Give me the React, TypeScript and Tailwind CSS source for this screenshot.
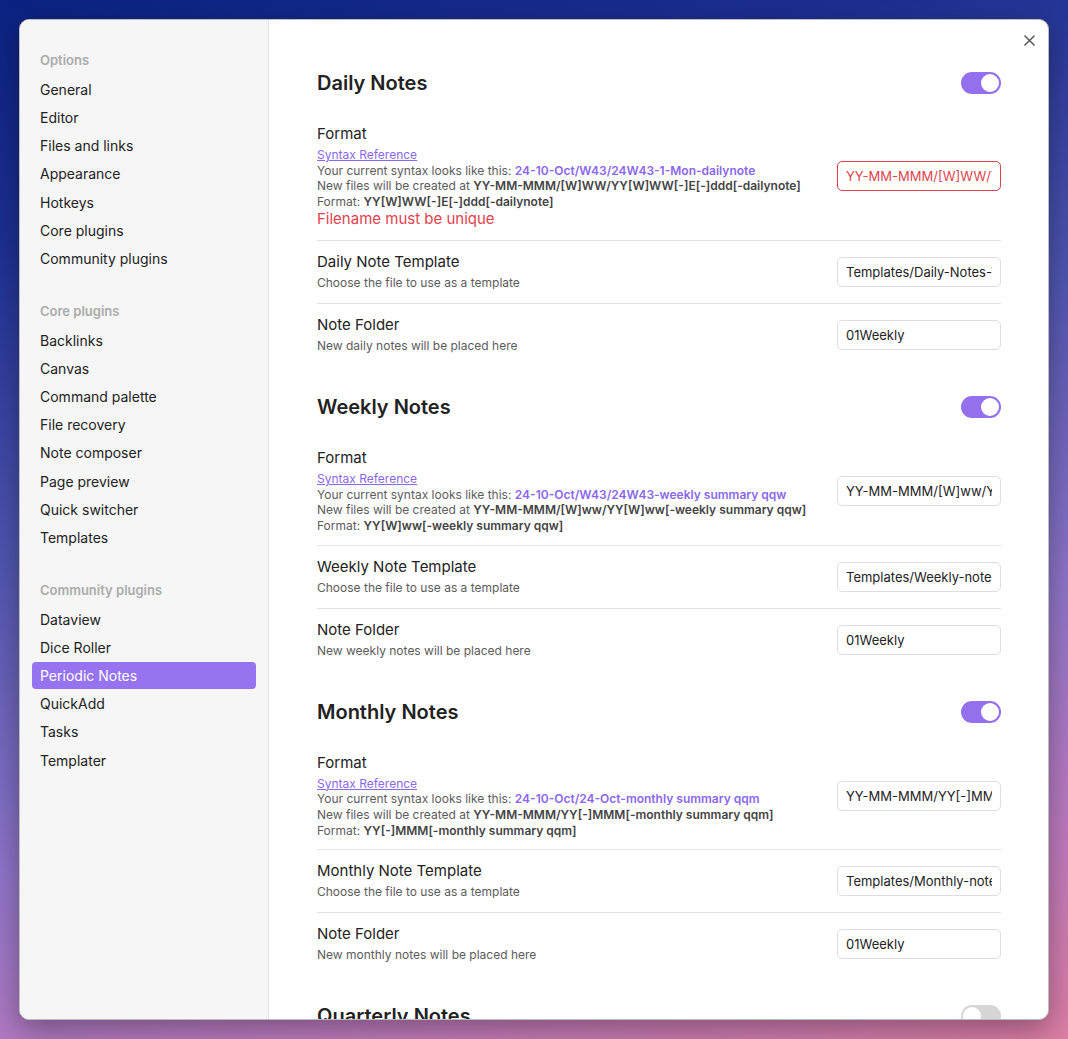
import React from "react";

const FONT = { fontFamily: "Inter, 'Noto Sans', sans-serif" };

type Section = {
  title: string;
  enabled: boolean;
  syntax?: string;
  createdAt?: string;
  format?: string;
  value?: string;
  error?: boolean;
  templateLabel?: string;
  template?: string;
  folderDesc?: string;
};

const NAV = [
  { header: "Options", items: ["General", "Editor", "Files and links", "Appearance", "Hotkeys", "Core plugins", "Community plugins"] },
  { header: "Core plugins", items: ["Backlinks", "Canvas", "Command palette", "File recovery", "Note composer", "Page preview", "Quick switcher", "Templates"] },
  { header: "Community plugins", items: ["Dataview", "Dice Roller", "Periodic Notes", "QuickAdd", "Tasks", "Templater"] },
];

const SECTIONS: Section[] = [
  {
    title: "Daily Notes",
    enabled: true,
    syntax: "24-10-Oct/W43/24W43-1-Mon-dailynote",
    createdAt: "YY-MM-MMM/[W]WW/YY[W]WW[-]E[-]ddd[-dailynote]",
    format: "YY[W]WW[-]E[-]ddd[-dailynote]",
    value: "YY-MM-MMM/[W]WW/YY[W]WW[-]E[-]ddd[-dailynote]",
    error: true,
    templateLabel: "Daily Note Template",
    template: "Templates/Daily-Notes-Template",
    folderDesc: "New daily notes will be placed here",
  },
  {
    title: "Weekly Notes",
    enabled: true,
    syntax: "24-10-Oct/W43/24W43-weekly summary qqw",
    createdAt: "YY-MM-MMM/[W]ww/YY[W]ww[-weekly summary qqw]",
    format: "YY[W]ww[-weekly summary qqw]",
    value: "YY-MM-MMM/[W]ww/YY[W]ww[-weekly summary qqw]",
    templateLabel: "Weekly Note Template",
    template: "Templates/Weekly-note-template",
    folderDesc: "New weekly notes will be placed here",
  },
  {
    title: "Monthly Notes",
    enabled: true,
    syntax: "24-10-Oct/24-Oct-monthly summary qqm",
    createdAt: "YY-MM-MMM/YY[-]MMM[-monthly summary qqm]",
    format: "YY[-]MMM[-monthly summary qqm]",
    value: "YY-MM-MMM/YY[-]MMM[-monthly summary qqm]",
    templateLabel: "Monthly Note Template",
    template: "Templates/Monthly-note-template",
    folderDesc: "New monthly notes will be placed here",
  },
  { title: "Quarterly Notes", enabled: false },
];

function Toggle({ on }: { on: boolean }) {
  return (
    <div
      className={
        "flex h-[22px] w-[40px] shrink-0 items-center rounded-full px-[2px] " +
        (on ? "justify-end bg-[#9470ef]" : "justify-start bg-[#d6d6d6]")
      }
    >
      <div className="h-[18px] w-[18px] rounded-full bg-white" />
    </div>
  );
}

function TextInput({ value, error }: { value: string; error?: boolean }) {
  return (
    <input
      readOnly
      value={value}
      style={FONT}
      className={
        "h-[30px] w-[164px] shrink-0 rounded-[5px] border bg-white px-2 text-[13px] outline-none " +
        (error ? "border-[#e0434b] text-[#e0434b]" : "border-[#dedede] text-[#222]")
      }
    />
  );
}

function Item({ label, desc, value }: { label: string; desc: string; value: string }) {
  return (
    <div className="flex items-center justify-between gap-6 border-t border-[#e3e3e3] py-[11px]">
      <div>
        <div className="text-[15px] leading-[20px] text-[#222]">{label}</div>
        <div className="mt-[2px] text-[12px] leading-[18px] text-[#5c5c5c]">{desc}</div>
      </div>
      <TextInput value={value} />
    </div>
  );
}

function SettingsSection({ s }: { s: Section }) {
  return (
    <div className="mb-[27px]">
      <div className="mb-[16px] flex h-[28px] items-center justify-between">
        <h3 className="text-[20px] font-semibold leading-[28px] text-[#222]">{s.title}</h3>
        <Toggle on={s.enabled} />
      </div>
      {s.syntax && (
        <>
          <div className="flex items-center justify-between gap-6 py-[11px]">
            <div>
              <div className="text-[15px] leading-[20px] text-[#222]">Format</div>
              <div className="mt-[3px] text-[12px] leading-[15.7px] text-[#5c5c5c]">
                <div>
                  <span className="text-[#8a68ee] underline">Syntax Reference</span>
                </div>
                <div>
                  Your current syntax looks like this:{" "}
                  <span className="font-semibold text-[#8a68ee]">{s.syntax}</span>
                </div>
                <div>
                  New files will be created at{" "}
                  <span className="font-semibold text-[#444]">{s.createdAt}</span>
                </div>
                <div>
                  Format: <span className="font-semibold text-[#444]">{s.format}</span>
                </div>
              </div>
              {s.error && (
                <div className="mb-[1px] text-[15px] leading-[18px] text-[#e0434b]">Filename must be unique</div>
              )}
            </div>
            <TextInput value={s.value!} error={s.error} />
          </div>
          <Item label={s.templateLabel!} desc="Choose the file to use as a template" value={s.template!} />
          <Item label="Note Folder" desc={s.folderDesc!} value="01Weekly" />
        </>
      )}
    </div>
  );
}

export default function App() {
  return (
    <div
      style={FONT}
      className="flex h-[1039px] w-full overflow-hidden bg-[linear-gradient(165deg,#0b2282_0%,#1c2f92_18%,#4f55b0_42%,#8f75c9_66%,#bd7bbf_84%,#dd7ea4_100%)] p-[19px]"
    >
      <div className="flex flex-1 overflow-hidden rounded-[10px] border border-[#bdbdbd] bg-white shadow-[0_10px_30px_rgba(0,0,0,0.35)]">
        <aside className="w-[249px] shrink-0 border-r border-[#e3e3e3] bg-[#f6f6f6] px-3 pt-[31px]">
          {NAV.map((g) => (
            <div key={g.header} className="mb-[30px]">
              <div className="mb-[7px] px-2 text-[13px] font-semibold leading-[18px] text-[#ababab]">{g.header}</div>
              {g.items.map((it) => (
                <div
                  key={it}
                  className={
                    "mb-[1.15px] flex h-[27px] items-center rounded-[4px] px-2 text-[14px] " +
                    (it === "Periodic Notes" ? "bg-[#9674f1] text-white" : "text-[#222]")
                  }
                >
                  {it}
                </div>
              ))}
            </div>
          ))}
        </aside>
        <main className="relative flex-1 overflow-hidden pl-[48px] pr-[47px] pt-[49px]">
          <button className="absolute right-[7px] top-[8px] flex h-[24px] w-[24px] items-center justify-center text-[#555]">
            <svg width="11" height="11" viewBox="0 0 12 12" fill="none" stroke="currentColor" strokeWidth="1.6" strokeLinecap="round">
              <path d="M1 1L11 11M11 1L1 11" />
            </svg>
          </button>
          {SECTIONS.map((s) => (
            <SettingsSection key={s.title} s={s} />
          ))}
        </main>
      </div>
    </div>
  );
}
